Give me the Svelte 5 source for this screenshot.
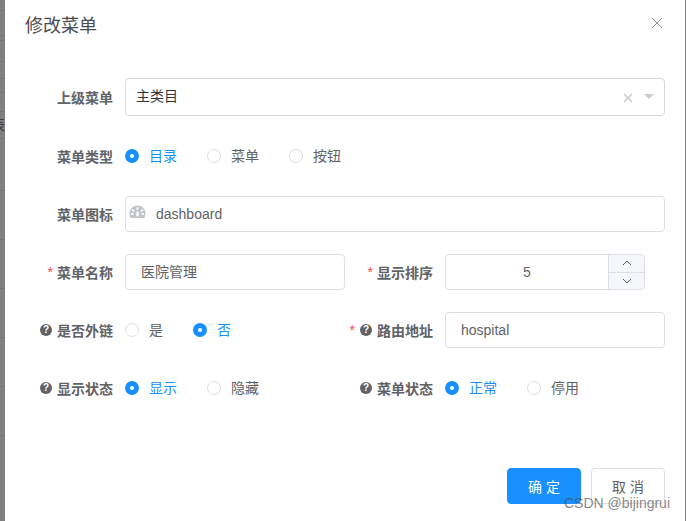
<script>
  const lines = [10, 35, 40, 61, 78, 92, 111, 138, 190, 239, 288, 337, 386, 435];
</script>

<div class="backdrop">
  <div class="strip">
    {#each lines as y}
      <span class="line" style="top: {y}px"></span>
    {/each}
    <span class="behind">表</span>
  </div>
  <div class="dialog">
    <header class="head">
      <span class="title">修改菜单</span>
      <svg class="close" width="12" height="12" viewBox="0 0 12 12" aria-hidden="true"><path d="M1 1l10 10M11 1L1 11" stroke="#909399" stroke-width="1" fill="none"/></svg>
    </header>

    <div class="body">
      <div class="row">
        <span class="label">上级菜单</span>
        <div class="control select">
          <span class="value">主类目</span>
          <svg class="clear" width="10" height="10" viewBox="0 0 10 10" aria-hidden="true"><path d="M1 1l8 8M9 1l-8 8" stroke="#cccccc" stroke-width="1.7" fill="none"/></svg>
          <span class="caret"></span>
        </div>
      </div>

      <div class="row">
        <span class="label">菜单类型</span>
        <div class="radios">
          <span class="radio on"><i></i>目录</span>
          <span class="radio"><i></i>菜单</span>
          <span class="radio"><i></i>按钮</span>
        </div>
      </div>

      <div class="row">
        <span class="label">菜单图标</span>
        <div class="control icon-input">
          <svg class="gauge" width="17" height="14" viewBox="0 0 17 14" aria-hidden="true">
            <path fill="#c0c4cc" fill-rule="evenodd" d="M8.500.5C4 .5.500 4 .5 8.500c0 1.800.5 3.300 1.400 4.500h13.200c.9-1.200 1.400-2.700 1.400-4.500C16.500 4 13 .5 8.500.5zM7.600 2.200h1.800v2.600H7.600zM3.700 3.900l1.900 1.900-1.200 1.200-1.900-1.900zM13.300 3.900l1.200 1.200-1.900 1.900-1.200-1.200zM2 8h2.600v1.700H2zM12.400 8H15v1.700h-2.600zM7.500 6.500h2l.5 4.800H7z"/>
          </svg>
          <span>dashboard</span>
        </div>
      </div>

      <div class="grid">
        <div class="row">
          <span class="label"><b>*</b>菜单名称</span>
          <div class="control text narrow cjk">医院管理</div>
        </div>
        <div class="row">
          <span class="label"><b>*</b>显示排序</span>
          <div class="number">
            <span class="num">5</span>
            <div class="steps">
              <span><svg width="10" height="6" viewBox="0 0 10 6" aria-hidden="true"><path d="M1 5l4-4 4 4" stroke="#606266" fill="none"/></svg></span>
              <span><svg width="10" height="6" viewBox="0 0 10 6" aria-hidden="true"><path d="M1 1l4 4 4-4" stroke="#606266" fill="none"/></svg></span>
            </div>
          </div>
        </div>

        <div class="row">
          <span class="label">{@render q()}是否外链</span>
          <div class="radios">
            <span class="radio"><i></i>是</span>
            <span class="radio on"><i></i>否</span>
          </div>
        </div>
        <div class="row">
          <span class="label"><b class="near">*</b>{@render q()}路由地址</span>
          <div class="control text narrow">hospital</div>
        </div>

        <div class="row">
          <span class="label">{@render q()}显示状态</span>
          <div class="radios">
            <span class="radio on"><i></i>显示</span>
            <span class="radio"><i></i>隐藏</span>
          </div>
        </div>
        <div class="row">
          <span class="label">{@render q()}菜单状态</span>
          <div class="radios">
            <span class="radio on"><i></i>正常</span>
            <span class="radio"><i></i>停用</span>
          </div>
        </div>
      </div>
    </div>

    <footer class="foot">
      <button class="btn primary">确 定</button>
      <button class="btn">取 消</button>
    </footer>
  </div>
  <div class="edge"></div>
  <span class="mark">CSDN @bijingrui</span>
</div>

{#snippet q()}
  <span class="q">?</span>
{/snippet}

<style>
  :global(body) {
    margin: 0;
    background: #7f7f7f;
  }
  .backdrop {
    position: relative;
    display: flex;
    width: 686px;
    height: 521px;
    overflow: hidden;
    background: #7f7f7f;
    font-family: "Liberation Sans", "Noto Sans CJK SC", sans-serif;
    font-size: 14px;
    color: #606266;
  }
  .strip {
    position: relative;
    width: 5px;
    flex: none;
    overflow: hidden;
    background: #808080;
  }
  .line {
    position: absolute;
    left: 0;
    width: 5px;
    height: 1px;
    background: #757575;
  }
  .behind {
    position: absolute;
    left: -9px;
    top: 117px;
    font-size: 14px;
    line-height: 16px;
    color: #3c4048;
  }
  .edge {
    width: 1px;
    flex: none;
  }
  .dialog {
    width: 680px;
    flex: none;
    background: #fff;
    box-sizing: border-box;
    padding: 0 20px;
  }
  .head {
    display: flex;
    justify-content: space-between;
    padding: 14px 0 10px;
    height: 24px;
  }
  .title {
    font-size: 18px;
    line-height: 24px;
    color: #4a4c50;
  }
  .close {
    margin: 3px 2px 0 0;
  }
  .body {
    padding-top: 30px;
    height: 360px;
  }
  .grid {
    display: grid;
    grid-template-columns: 320px 320px;
  }
  .row {
    display: flex;
    align-items: center;
    margin-bottom: 22px;
    min-height: 36px;
  }
  .label {
    width: 100px;
    flex: none;
    box-sizing: border-box;
    padding-right: 12px;
    display: flex;
    align-items: center;
    justify-content: flex-end;
    font-weight: 700;
    color: #606266;
    white-space: nowrap;
  }
  .label b {
    color: #ff4949;
    font-weight: 400;
    margin-right: 4px;
  }
  .label b.near {
    margin-right: 5px;
  }
  .q {
    width: 12px;
    height: 12px;
    margin-right: 5px;
    border-radius: 50%;
    background: #606266;
    color: #fff;
    font-size: 10px;
    line-height: 12px;
    text-align: center;
    font-weight: 700;
  }
  .control {
    box-sizing: border-box;
    height: 36px;
    width: 540px;
    border: 1px solid #dcdfe6;
    border-radius: 4px;
    display: flex;
    align-items: center;
    background: #fff;
  }
  .control.narrow {
    width: 220px;
  }
  .text {
    padding-left: 15px;
  }
  .cjk {
    padding-bottom: 2px;
  }
  .select {
    height: 38px;
    border-color: #d9d9d9;
    padding: 0 10px;
    color: #333;
  }
  .value {
    flex: 1;
    margin-bottom: 4px;
  }
  .clear {
    margin-right: 11px;
    margin-top: 1px;
  }
  .caret {
    width: 0;
    height: 0;
    border: 5px solid transparent;
    border-top: 5px solid #cccccc;
    border-bottom: 0;
    margin-bottom: 1px;
  }
  .icon-input {
    padding-left: 3px;
  }
  .gauge {
    margin: -4px 10px 0 0;
  }
  .number {
    box-sizing: border-box;
    width: 200px;
    height: 36px;
    border: 1px solid #dcdfe6;
    border-radius: 4px;
    display: flex;
    overflow: hidden;
  }
  .num {
    flex: 1;
    text-align: center;
    line-height: 34px;
  }
  .steps {
    width: 35px;
    border-left: 1px solid #dcdfe6;
    background: #f5f7fa;
    display: flex;
    flex-direction: column;
  }
  .steps span {
    flex: 1;
    display: flex;
    align-items: center;
    justify-content: center;
  }
  .steps span:first-child {
    border-bottom: 1px solid #dcdfe6;
  }
  .radios {
    display: flex;
    gap: 30px;
  }
  .radio {
    display: flex;
    align-items: center;
    line-height: 20px;
    color: #606266;
  }
  .radio i {
    box-sizing: border-box;
    width: 14px;
    height: 14px;
    margin-right: 10px;
    border: 1px solid #dcdfe6;
    border-radius: 50%;
    background: #fff;
  }
  .radio.on {
    color: #1890ff;
  }
  .radio.on i {
    border: 5px solid #1890ff;
  }
  .foot {
    display: flex;
    justify-content: flex-end;
    gap: 10px;
    padding-top: 30px;
  }
  .btn {
    width: 74px;
    height: 36px;
    box-sizing: border-box;
    border: 1px solid #dcdfe6;
    border-radius: 4px;
    background: #fff;
    color: #606266;
    font: inherit;
    padding: 0;
  }
  .btn.primary {
    background: #1890ff;
    border-color: #1890ff;
    color: #fff;
  }
  .mark {
    position: absolute;
    left: 564px;
    top: 495px;
    font-size: 14px;
    line-height: 17px;
    color: rgba(80, 80, 80, 0.7);
  }
</style>
